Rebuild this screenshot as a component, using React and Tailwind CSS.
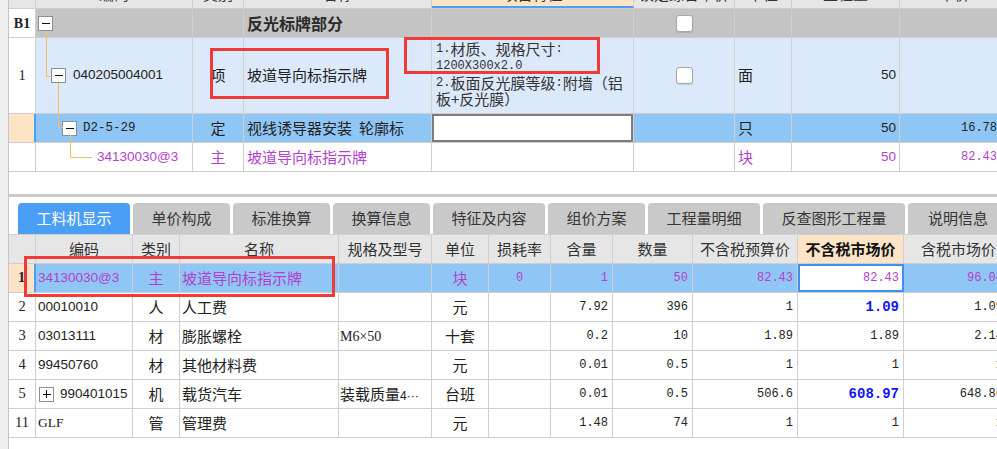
import React from 'react';

const ZH = "font-['Noto_Sans_CJK_SC',sans-serif]";
const MONO = "font-['Liberation_Mono','Noto_Sans_CJK_SC',monospace]";
const SANS = "font-['Liberation_Sans','Noto_Sans_CJK_SC',sans-serif]";
const SERIF = "font-['Liberation_Serif','Noto_Sans_CJK_SC',serif]";
const PURPLE = 'text-[#b43fcb]';
const GRID = 'border-r border-[#cfcfcf]';

// column widths (border included)
const TOP_W = ['w-[27px]', 'w-[157px]', 'w-[51px]', 'w-[188px]', 'w-[202px]', 'w-[101px]', 'w-[57px]', 'w-[108px]', 'w-[110px]'];
const BOT_W = ['w-[27px]', 'w-[97px]', 'w-[47px]', 'w-[159px]', 'w-[93px]', 'w-[57px]', 'w-[62px]', 'w-[62px]', 'w-[80px]', 'w-[105px]', 'w-[106px]', 'w-[110px]'];

const Cell = ({ w, line = GRID, className = '', children }) => (
  <div className={`${w} shrink-0 h-full ${line} flex items-center overflow-hidden whitespace-nowrap ${className}`}>
    {children}
  </div>
);

const TreeBox = ({ plus }) => (
  <span className="relative w-[15px] h-[15px] shrink-0 border border-[#8f8f8f] bg-white flex items-center justify-center">
    <span className="w-[8px] h-px bg-[#111]" />
    {plus && <span className="absolute w-px h-[8px] bg-[#111]" />}
  </span>
);

const Checkbox = () => (
  <span className="w-[17px] h-[17px] rounded-[3px] border border-[#a6a6a6] bg-white shadow-[0_1px_1px_rgba(0,0,0,0.12)]" />
);

const Mono = ({ children }) => <span className={`${MONO} text-[12px]`}>{children}</span>;

// one line of the feature text, ascii runs in mono
const SpecLine = ({ h, children }) => <div className={`flex items-center ${h}`}>{children}</div>;

function TopGrid() {
  const head = ['', '编码', '类别', '名称', '项目特征', '锁定综合单价', '单位', '工程量', '单价'];
  return (
    <div className="h-[172px] overflow-hidden">
      <div className="-mt-[20px]">
        {/* header, mostly scrolled away */}
        <div className="flex h-[29px] border-b border-[#cfcfcf] bg-[#e6e6e6]">
          {head.map((h, i) => (
            <Cell
              key={i}
              w={TOP_W[i]}
              className={`justify-center items-start pt-[3px] text-[15px] text-[#333] ${ZH} ${i === 4 ? 'bg-[#fde4c6] border-b-2 border-b-[#4d9ef5]' : ''}`}
            >
              {h}
            </Cell>
          ))}
        </div>

        {/* B1 section row */}
        <div className="flex h-[29px] border-b border-[#cfcfcf] bg-[#c4c4c4]">
          <Cell w={TOP_W[0]} className={`justify-center bg-white font-bold text-[14px] text-[#222] ${SERIF}`}>B1</Cell>
          <Cell w={TOP_W[1]} className="pl-[2px]"><TreeBox /></Cell>
          <Cell w={TOP_W[2]} />
          <Cell w={TOP_W[3]} className={`pl-[3px] font-bold text-[16px] text-[#2a2a2a] ${ZH}`}>反光标牌部分</Cell>
          <Cell w={TOP_W[4]} />
          <Cell w={TOP_W[5]} className="justify-center"><Checkbox /></Cell>
          <Cell w={TOP_W[6]} />
          <Cell w={TOP_W[7]} />
          <Cell w={TOP_W[8]} />
        </div>

        {/* item row */}
        <div className="flex h-[76px] border-b border-[#cfcfcf] bg-[#dce9fb] text-[#222]">
          <Cell w={TOP_W[0]} className={`justify-center bg-white text-[14.5px] ${SERIF}`}>1</Cell>
          <Cell w={TOP_W[1]} className={`pl-[15px] gap-[7px] text-[13.5px] ${SANS}`}>
            <TreeBox />
            <span>040205004001</span>
          </Cell>
          <Cell w={TOP_W[2]} className={`justify-center text-[15px] ${ZH}`}>项</Cell>
          <Cell w={TOP_W[3]} className={`pl-[3px] text-[15px] ${ZH}`}>坡道导向标指示牌</Cell>
          <Cell w={TOP_W[4]} className={`items-start pt-[3px] pl-[4px] text-[15px] leading-[16px] text-[#333] ${ZH}`}>
            <div className="flex flex-col">
              <SpecLine h="h-[16px]"><Mono>1.</Mono><span>材质、规格尺寸</span><Mono>:</Mono></SpecLine>
              <SpecLine h="h-[17px]"><Mono>1200X300x2.0</Mono></SpecLine>
              <SpecLine h="h-[17px]"><Mono>2.</Mono><span>板面反光膜等级</span><Mono>:</Mono><span>附墙（铝</span></SpecLine>
              <SpecLine h="h-[16px]"><span>板+反光膜）</span></SpecLine>
            </div>
          </Cell>
          <Cell w={TOP_W[5]} className="justify-center"><Checkbox /></Cell>
          <Cell w={TOP_W[6]} className={`pl-[3px] text-[15px] ${ZH}`}>面</Cell>
          <Cell w={TOP_W[7]} className={`justify-end pr-[3px] text-[13.5px] ${SANS}`}>50</Cell>
          <Cell w={TOP_W[8]} />
        </div>

        {/* quota row (selected) */}
        <div className="flex h-[29px] border-b border-[#cfcfcf] bg-[#90c6f5] text-[#222]">
          <Cell w={TOP_W[0]} line="border-r-2 border-[#4d9ef5]" className="bg-[#fde4c6]" />
          <Cell w={TOP_W[1]} className={`pl-[26px] gap-[6px] text-[12.5px] ${MONO}`}>
            <TreeBox />
            <span>D2-5-29</span>
          </Cell>
          <Cell w={TOP_W[2]} className={`justify-center text-[15px] ${ZH}`}>定</Cell>
          <Cell w={TOP_W[3]} className={`pl-[3px] text-[15px] ${ZH}`}>
            <span>视线诱导器安装</span>
            <span className="ml-[7px]">轮廓标</span>
          </Cell>
          <Cell w={TOP_W[4]}>
            <div className="w-full h-full border-2 border-[#7d7d7d] bg-white" />
          </Cell>
          <Cell w={TOP_W[5]} />
          <Cell w={TOP_W[6]} className={`pl-[3px] text-[15px] ${ZH}`}>只</Cell>
          <Cell w={TOP_W[7]} className={`justify-end pr-[3px] text-[13.5px] ${SANS}`}>50</Cell>
          <Cell w={TOP_W[8]} className={`justify-end pr-[12px] text-[12px] ${MONO}`}>16.78</Cell>
        </div>

        {/* main material row */}
        <div className={`flex h-[29px] border-b border-[#cfcfcf] bg-white ${PURPLE}`}>
          <Cell w={TOP_W[0]} />
          <Cell w={TOP_W[1]} className={`pl-[61px] text-[13.5px] ${SANS}`}>34130030@3</Cell>
          <Cell w={TOP_W[2]} className={`justify-center text-[15px] ${ZH}`}>主</Cell>
          <Cell w={TOP_W[3]} className={`pl-[3px] text-[15px] ${ZH}`}>坡道导向标指示牌</Cell>
          <Cell w={TOP_W[4]} />
          <Cell w={TOP_W[5]} />
          <Cell w={TOP_W[6]} className={`pl-[3px] text-[15px] ${ZH}`}>块</Cell>
          <Cell w={TOP_W[7]} className={`justify-end pr-[3px] text-[13.5px] ${SANS}`}>50</Cell>
          <Cell w={TOP_W[8]} className={`justify-end pr-[12px] text-[12px] ${MONO}`}>82.43</Cell>
        </div>
      </div>
    </div>
  );
}

const TABS = [
  { label: '工料机显示', w: 'w-[112px]', active: true },
  { label: '单价构成', w: 'w-[97px]' },
  { label: '标准换算', w: 'w-[97px]' },
  { label: '换算信息', w: 'w-[97px]' },
  { label: '特征及内容', w: 'w-[112px]' },
  { label: '组价方案', w: 'w-[97px]' },
  { label: '工程量明细', w: 'w-[112px]' },
  { label: '反查图形工程量', w: 'w-[142px]' },
  { label: '说明信息', w: 'w-[100px]' },
];

const ROWS = [
  { n: '1', code: '34130030@3', type: '主', name: '坡道导向标指示牌', unit: '块', loss: '0', q1: '1', q2: '50', p1: '82.43', p2: '82.43', p3: '96.04', sel: true },
  { n: '2', code: '00010010', type: '人', name: '人工费', unit: '元', q1: '7.92', q2: '396', p1: '1', p2: '1.09', p3: '1.09', bold: true },
  { n: '3', code: '03013111', type: '材', name: '膨胀螺栓', spec: 'M6×50', unit: '十套', q1: '0.2', q2: '10', p1: '1.89', p2: '1.89', p3: '2.14' },
  { n: '4', code: '99450760', type: '材', name: '其他材料费', unit: '元', q1: '0.01', q2: '0.5', p1: '1', p2: '1', p3: '1' },
  { n: '5', code: '990401015', plus: true, type: '机', name: '载货汽车', spec: 'truck', unit: '台班', q1: '0.01', q2: '0.5', p1: '506.6', p2: '608.97', p3: '648.86', bold: true },
  { n: '11', code: 'GLF', type: '管', name: '管理费', unit: '元', q1: '1.48', q2: '74', p1: '1', p2: '1', p3: '1' },
];

const NUM = `justify-end pr-[4px] text-[12px] ${MONO}`;

function Spec({ value }) {
  if (value === 'M6×50') return <span className={`text-[14px] ${SERIF}`}>M6×50</span>;
  if (value === 'truck')
    return (
      <span className={`text-[15px] ${ZH}`}>
        装载质量<span className={`text-[12px] ${SANS}`}>4···</span>
      </span>
    );
  return null;
}

function BottomRow({ r }) {
  const sel = r.sel;
  return (
    <div className={`flex h-[29px] border-b border-[#cfcfcf] ${sel ? `bg-[#90c6f5] ${PURPLE}` : 'bg-white text-[#222]'}`}>
      <Cell
        w={BOT_W[0]}
        line={sel ? 'border-r-2 border-[#4d9ef5]' : GRID}
        className={`justify-center text-[14.5px] text-[#222] ${SERIF} ${sel ? 'bg-[#fde4c6] font-bold' : ''}`}
      >
        {r.n}
      </Cell>
      <Cell w={BOT_W[1]} className={`gap-[6px] text-[13.5px] ${r.code === 'GLF' ? SERIF : SANS} ${r.plus ? 'pl-[3px]' : 'pl-[2px]'}`}>
        {r.plus && <TreeBox plus />}
        <span>{r.code}</span>
      </Cell>
      <Cell w={BOT_W[2]} className={`justify-center text-[15px] ${ZH}`}>{r.type}</Cell>
      <Cell w={BOT_W[3]} className={`pl-[2px] text-[15px] ${ZH}`}>{r.name}</Cell>
      <Cell w={BOT_W[4]} className="pl-[1px]"><Spec value={r.spec} /></Cell>
      <Cell w={BOT_W[5]} className={`justify-center text-[15px] ${ZH}`}>{r.unit}</Cell>
      <Cell w={BOT_W[6]} className={`justify-center text-[12px] ${MONO}`}>{r.loss}</Cell>
      <Cell w={BOT_W[7]} className={NUM}>{r.q1}</Cell>
      <Cell w={BOT_W[8]} className={NUM}>{r.q2}</Cell>
      <Cell w={BOT_W[9]} className={NUM}>{r.p1}</Cell>
      <Cell
        w={BOT_W[10]}
        line={sel ? 'border-2 border-[#3d8ff2]' : GRID}
        className={`${sel ? 'bg-white justify-end pr-[3px]' : 'justify-end pr-[4px]'} ${MONO} ${r.bold ? 'text-[14px] font-bold text-[#1414f0]' : 'text-[12px]'}`}
      >
        {r.p2}
      </Cell>
      <Cell w={BOT_W[11]} className={`justify-end pr-[10px] text-[12px] ${MONO}`}>{r.p3}</Cell>
    </div>
  );
}

function BottomPanel() {
  const head = ['', '编码', '类别', '名称', '规格及型号', '单位', '损耗率', '含量', '数量', '不含税预算价', '不含税市场价', '含税市场价'];
  return (
    <div className="flex flex-col">
      {/* tabs */}
      <div className="h-[37px] pt-[6px] pl-[9px] flex gap-[3px] bg-white">
        {TABS.map((t) => (
          <div
            key={t.label}
            className={`${t.w} shrink-0 h-[31px] rounded-t-[4px] flex items-center justify-center text-[15px] ${ZH} ${
              t.active ? 'bg-[#4a9ef6] text-white' : 'bg-[#c9c9c9] text-[#363636]'
            }`}
          >
            {t.label}
          </div>
        ))}
      </div>

      {/* header */}
      <div className="flex h-[30px] border-y border-[#cfcfcf] bg-[#e6e6e6]">
        {head.map((h, i) => (
          <Cell
            key={i}
            w={BOT_W[i]}
            className={`justify-center text-[15px] ${ZH} ${i === 10 ? 'bg-[#fde4c6] font-bold text-[#111]' : 'text-[#333]'}`}
          >
            {h}
          </Cell>
        ))}
      </div>

      {ROWS.map((r) => (
        <BottomRow key={r.n} r={r} />
      ))}
    </div>
  );
}

export default function App() {
  return (
    <div className="relative w-[997px] h-[449px] overflow-hidden bg-white flex">
      <div className="w-[8px] shrink-0 bg-[#eeeeee]" />
      <div className="w-[1100px] shrink-0 border-l border-[#c6c6c6] flex flex-col">
        <TopGrid />
        <div className="h-[22px] bg-white" />
        <div className="h-[3px] bg-[#cbcbcb]" />
        <BottomPanel />
      </div>

      {/* tree connector lines */}
      <svg className="absolute left-0 top-0 w-[120px] h-[172px] pointer-events-none" viewBox="0 0 120 172">
        <path d="M46.5 31 V76.5 H51 M58.5 83 V127.5 H63 M70.5 135 V157.5 H92" fill="none" stroke="#f6bb6b" strokeWidth="1" />
      </svg>

      {/* red annotation boxes */}
      <div className="absolute left-[210px] top-[48px] w-[179px] h-[51px] border-[3px] border-[#f03a3a]" />
      <div className="absolute left-[404px] top-[37px] w-[196px] h-[37px] border-[3px] border-[#f03a3a]" />
      <div className="absolute left-[24px] top-[256px] w-[311px] h-[41px] border-[3px] border-[#f03a3a]" />
    </div>
  );
}
